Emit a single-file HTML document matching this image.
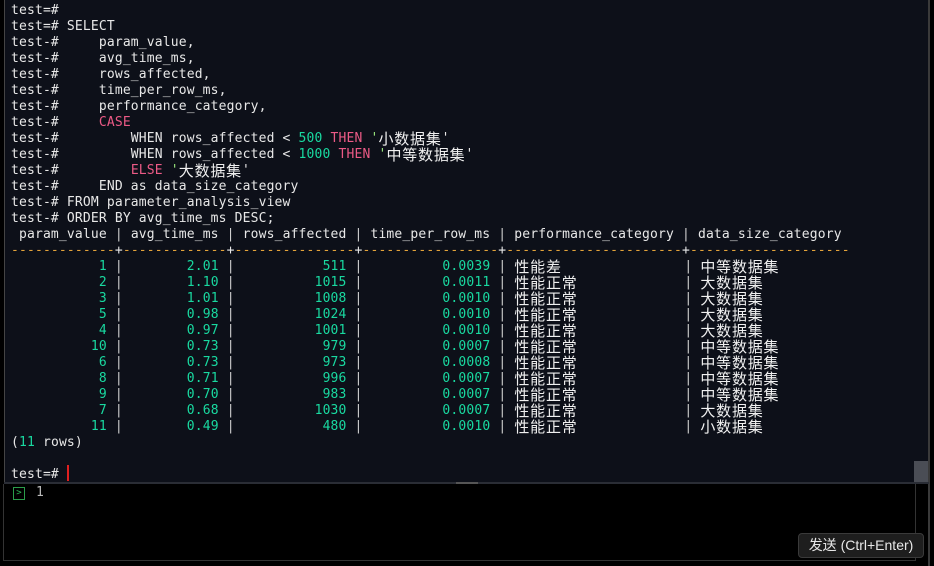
<!DOCTYPE html>
<html><head><meta charset="utf-8"><style>
html,body{margin:0;padding:0;background:#000;width:934px;height:566px;overflow:hidden}
#term{position:absolute;left:4px;top:0;width:925px;height:482px;background:#0d1019;border-left:1px solid #444;}
#rb{position:absolute;left:928px;top:0;width:2px;height:566px;background:#3a3a3a}
pre{position:absolute;left:11px;top:3px;margin:0;font-family:"DejaVu Sans Mono","Liberation Mono",monospace;font-size:13px;letter-spacing:0.16px;line-height:16px;color:#e8e8e8;white-space:pre}
.k{color:#ec5a86}.s{color:#9ae87e}.n{color:#19d9a0}.d{color:#e3a33a}.p{color:#cfcfcf}
.c{display:inline-block;font-family:"WenQuanYi Zen Hei","Noto Sans CJK SC",sans-serif;font-size:15px;letter-spacing:0.8px;color:#f0f0f0;vertical-align:top;height:16px;line-height:16px;overflow:visible}
.w21{width:170px}
#cur{position:absolute;left:67px;top:465px;width:2px;height:16px;background:#e02020}
#sb{position:absolute;left:914px;top:461px;width:14px;height:21px;background:#4a4d55}
#sep{position:absolute;left:4px;top:482px;width:925px;height:2px;background:#2a2d35}
#grip{position:absolute;left:456px;top:482px;width:22px;height:2px;background:#555}
#inp{position:absolute;left:3px;top:484px;width:911px;height:76px;border-left:1px solid #333;border-right:1px solid #333;border-bottom:1px solid #333;background:#000}
#icon{position:absolute;left:13px;top:487px;width:10px;height:11px;border:1px solid #2a9d4a;color:#2fbf5a;font:9px/11px "DejaVu Sans Mono",monospace;text-align:center}
#one{position:absolute;left:36px;top:485px;color:#bbb;font:13px/16px "DejaVu Sans Mono",monospace}
#btn{position:absolute;left:798px;top:533px;background:#1e1e1e;border:1px solid #3a3a3a;border-radius:4px;color:#e8e8e8;font:14px/23px "Liberation Sans","Noto Sans CJK SC",sans-serif;text-align:center;box-sizing:border-box;width:126px;height:25px}
</style></head><body>
<div id="term"></div><div id="rb"></div>
<pre>test=#
test=# SELECT
test-#     param_value,
test-#     avg_time_ms,
test-#     rows_affected,
test-#     time_per_row_ms,
test-#     performance_category,
test-#     <span class="k">CASE</span>
test-#         WHEN rows_affected &lt; <span class="n">500</span> <span class="k">THEN</span> <span class="s">'<span class="c">小数据</span></span><span class="c">集</span>'
test-#         WHEN rows_affected &lt; <span class="n">1000</span> <span class="k">THEN</span> <span class="s">'<span class="c">中等数</span></span><span class="c">据集</span>'
test-#         <span class="k">ELSE</span> <span class="s">'<span class="c">大数据</span></span><span class="c">集</span>'
test-#     END as data_size_category
test-# FROM parameter_analysis_view
test-# ORDER BY avg_time_ms DESC;
 param_value <span class="p">|</span> avg_time_ms <span class="p">|</span> rows_affected <span class="p">|</span> time_per_row_ms <span class="p">|</span> performance_category <span class="p">|</span> data_size_category
<span class="d">-------------</span>+<span class="d">-------------</span>+<span class="d">---------------</span>+<span class="d">-----------------</span>+<span class="d">----------------------</span>+<span class="d">--------------------</span>
<span class="n">           1</span> <span class="p">|</span> <span class="n">       2.01</span> <span class="p">|</span> <span class="n">          511</span> <span class="p">|</span> <span class="n">         0.0039</span> <span class="p">|</span> <span class="c w21">性能差</span><span class="p">|</span> <span class="c">中等数据集</span>
<span class="n">           2</span> <span class="p">|</span> <span class="n">       1.10</span> <span class="p">|</span> <span class="n">         1015</span> <span class="p">|</span> <span class="n">         0.0011</span> <span class="p">|</span> <span class="c w21">性能正常</span><span class="p">|</span> <span class="c">大数据集</span>
<span class="n">           3</span> <span class="p">|</span> <span class="n">       1.01</span> <span class="p">|</span> <span class="n">         1008</span> <span class="p">|</span> <span class="n">         0.0010</span> <span class="p">|</span> <span class="c w21">性能正常</span><span class="p">|</span> <span class="c">大数据集</span>
<span class="n">           5</span> <span class="p">|</span> <span class="n">       0.98</span> <span class="p">|</span> <span class="n">         1024</span> <span class="p">|</span> <span class="n">         0.0010</span> <span class="p">|</span> <span class="c w21">性能正常</span><span class="p">|</span> <span class="c">大数据集</span>
<span class="n">           4</span> <span class="p">|</span> <span class="n">       0.97</span> <span class="p">|</span> <span class="n">         1001</span> <span class="p">|</span> <span class="n">         0.0010</span> <span class="p">|</span> <span class="c w21">性能正常</span><span class="p">|</span> <span class="c">大数据集</span>
<span class="n">          10</span> <span class="p">|</span> <span class="n">       0.73</span> <span class="p">|</span> <span class="n">          979</span> <span class="p">|</span> <span class="n">         0.0007</span> <span class="p">|</span> <span class="c w21">性能正常</span><span class="p">|</span> <span class="c">中等数据集</span>
<span class="n">           6</span> <span class="p">|</span> <span class="n">       0.73</span> <span class="p">|</span> <span class="n">          973</span> <span class="p">|</span> <span class="n">         0.0008</span> <span class="p">|</span> <span class="c w21">性能正常</span><span class="p">|</span> <span class="c">中等数据集</span>
<span class="n">           8</span> <span class="p">|</span> <span class="n">       0.71</span> <span class="p">|</span> <span class="n">          996</span> <span class="p">|</span> <span class="n">         0.0007</span> <span class="p">|</span> <span class="c w21">性能正常</span><span class="p">|</span> <span class="c">中等数据集</span>
<span class="n">           9</span> <span class="p">|</span> <span class="n">       0.70</span> <span class="p">|</span> <span class="n">          983</span> <span class="p">|</span> <span class="n">         0.0007</span> <span class="p">|</span> <span class="c w21">性能正常</span><span class="p">|</span> <span class="c">中等数据集</span>
<span class="n">           7</span> <span class="p">|</span> <span class="n">       0.68</span> <span class="p">|</span> <span class="n">         1030</span> <span class="p">|</span> <span class="n">         0.0007</span> <span class="p">|</span> <span class="c w21">性能正常</span><span class="p">|</span> <span class="c">大数据集</span>
<span class="n">          11</span> <span class="p">|</span> <span class="n">       0.49</span> <span class="p">|</span> <span class="n">          480</span> <span class="p">|</span> <span class="n">         0.0010</span> <span class="p">|</span> <span class="c w21">性能正常</span><span class="p">|</span> <span class="c">小数据集</span>
(<span class="n">11</span> rows)

test=#</pre>
<div id="cur"></div><div id="sb"></div>
<div id="sep"></div><div id="grip"></div>
<div id="inp"></div>
<div id="icon">&gt;</div>
<div id="one">1</div>
<div id="btn">发送 (Ctrl+Enter)</div>
</body></html>
